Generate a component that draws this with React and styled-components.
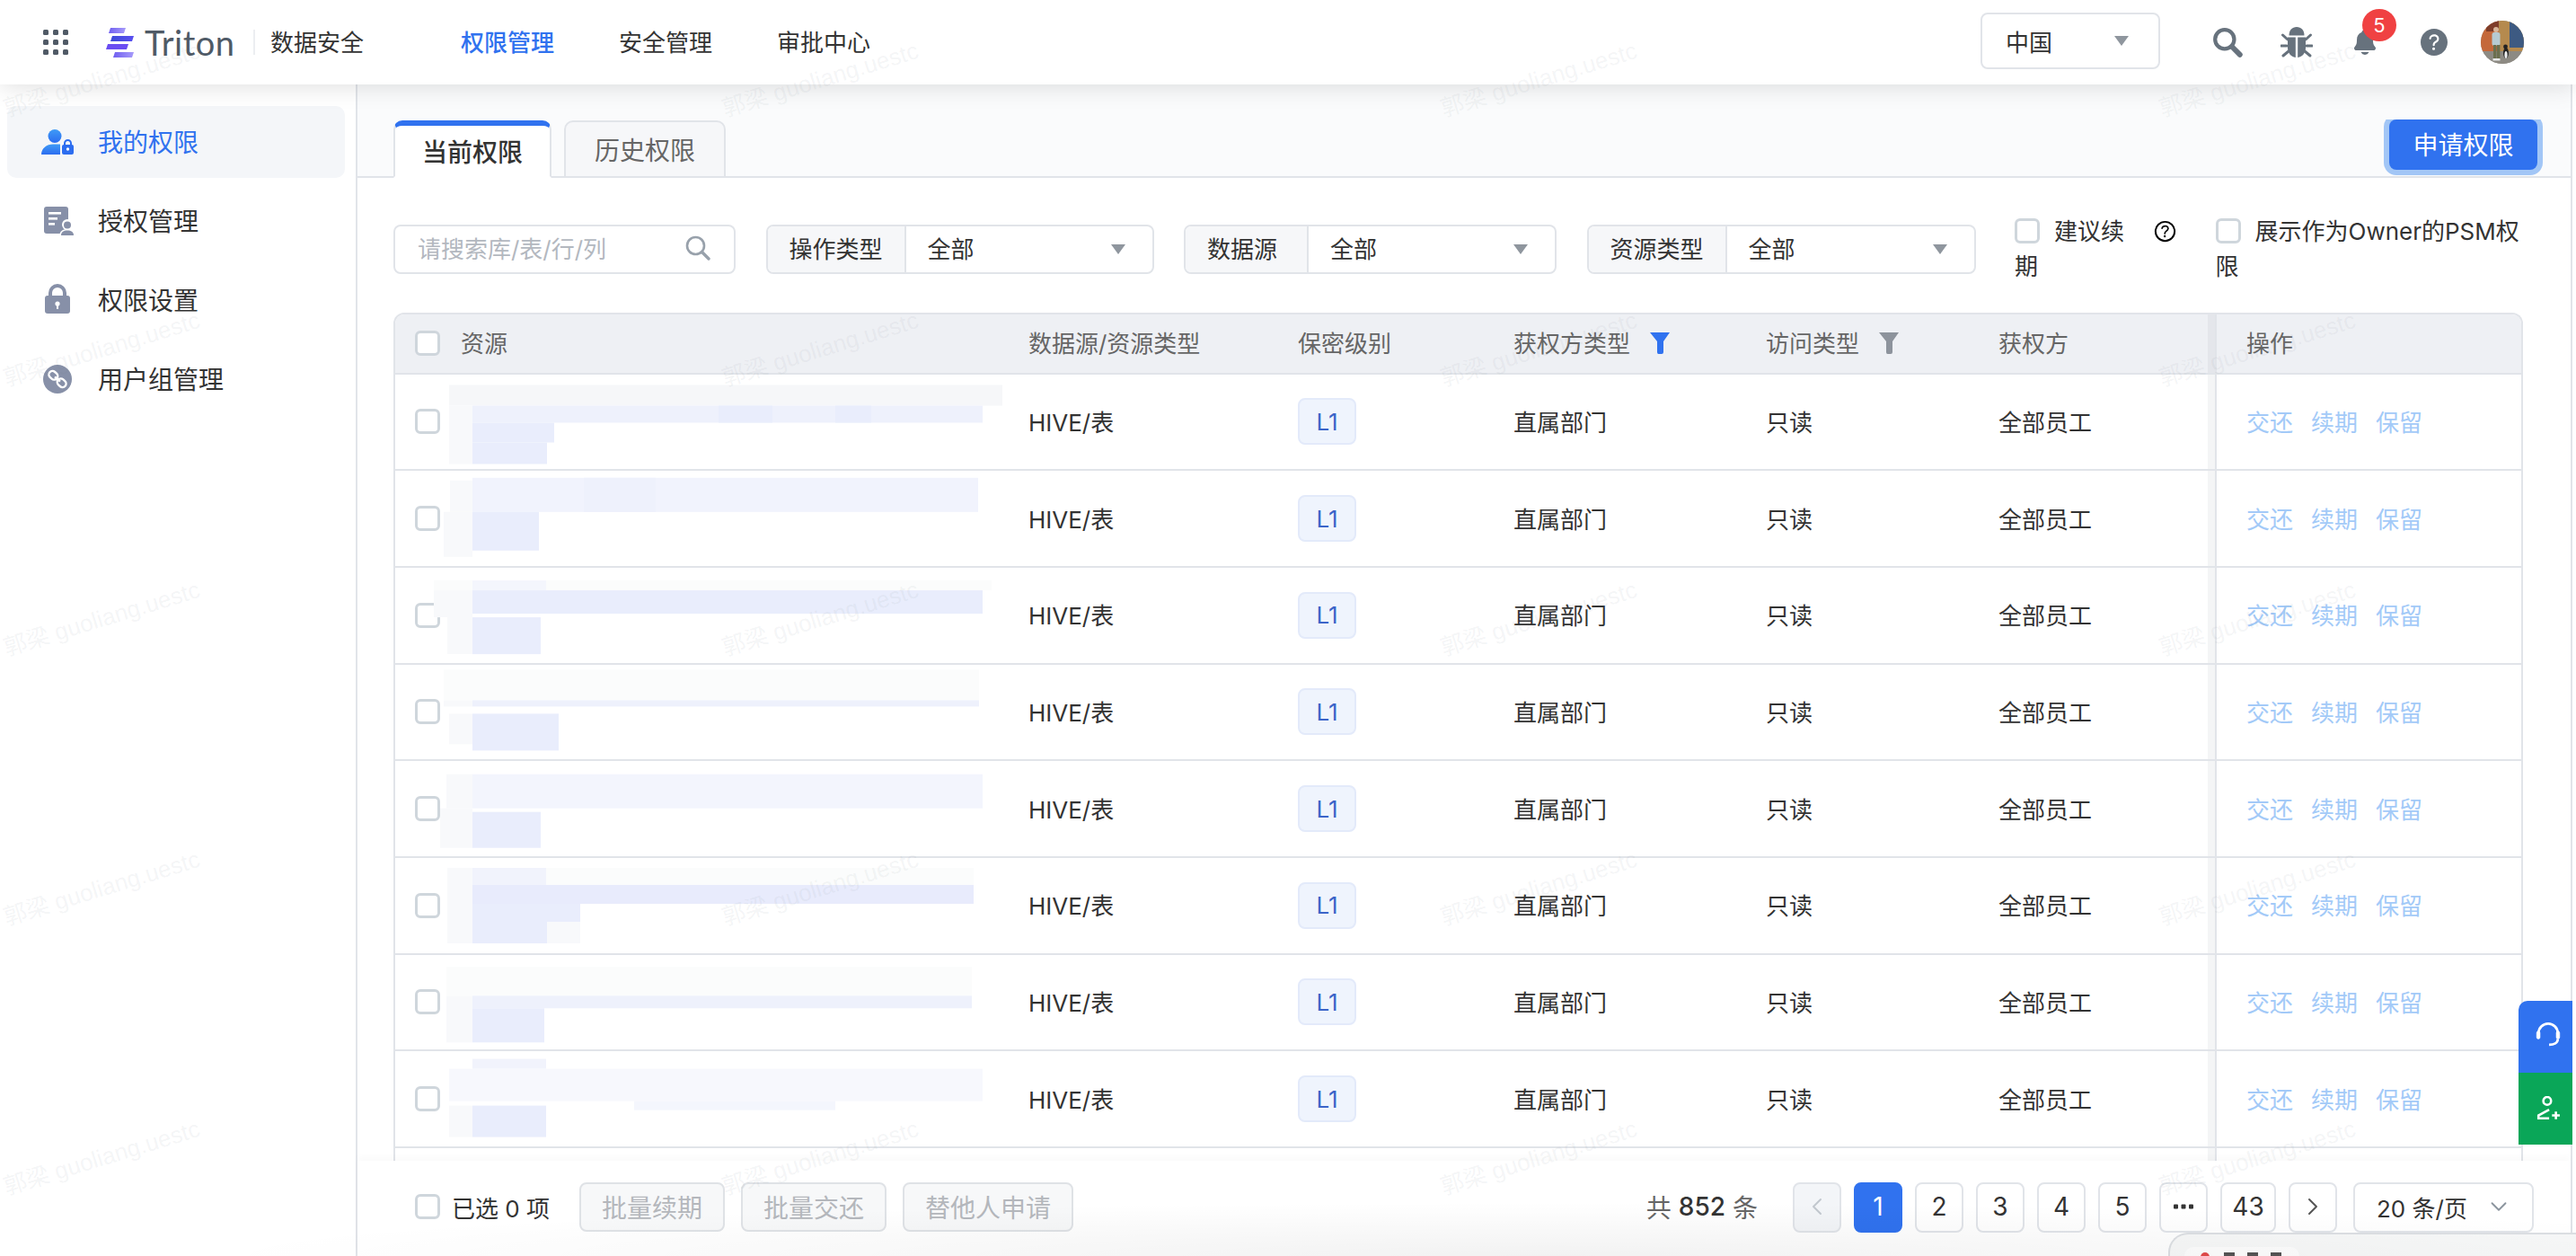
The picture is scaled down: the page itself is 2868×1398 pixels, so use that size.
import React from 'react';
import styled, { createGlobalStyle } from 'styled-components';
import { IoNotifications, IoHelpCircle, IoHelpCircleOutline } from 'react-icons/io5';
import { ChevronLeft, ChevronRight, ChevronDown } from 'lucide-react';

const FONT = `Inter, "Noto Sans CJK SC", sans-serif`;
const BLUE = '#3072ef';
const LINE = '#e1e4e9';

const Global = createGlobalStyle`
  html, body { margin: 0; padding: 0; background: #fff; overflow: hidden; }
  * { box-sizing: border-box; }
  #root { font-family: ${FONT}; color: #333; }
`;

const Page = styled.div`
  position: relative;
  width: 100%;
  height: 100vh;
  display: flex;
  flex-direction: column;
  overflow: hidden;
  background: #fff;
`;

/* ---------- top bar ---------- */
const TopBar = styled.header`
  position: relative;
  z-index: 3;
  flex: none;
  height: 94px;
  display: flex;
  align-items: center;
  padding: 0 58px 0 48px;
  background: #fff;
  box-shadow: 0 2px 26px rgba(0, 0, 0, 0.13);
`;
const DotsIcon = styled.svg`
  flex: none;
  width: 28px;
  height: 28px;
  margin: 0 42px 0 0;
  fill: #505a66;
`;
const LogoMark = styled.svg`
  flex: none;
  width: 31px;
  height: 33px;
  margin-right: 12px;
`;
const LogoText = styled.span`
  font-family: Lato, "Open Sans", sans-serif;
  font-size: 38px;
  line-height: 40px;
  width: 102px;
  letter-spacing: 0.5px;
  color: #4f5a66;
  white-space: nowrap;
`;
const LogoDivider = styled.i`
  flex: none;
  width: 2px;
  height: 28px;
  margin: 0 17px 0 19px;
  background: #eceef1;
`;
const Product = styled.span`
  font-size: 26px;
  width: 104px;
  padding-bottom: 4px;
  color: #333;
`;
const MainNav = styled.nav`
  display: flex;
  gap: 72px;
  margin-left: 108px;
  padding-bottom: 4px;
`;
const MainNavItem = styled.a`
  font-size: 26px;
  font-weight: ${(p) => (p.$active ? 500 : 400)};
  color: ${(p) => (p.$active ? BLUE : '#333')};
`;
const TopRight = styled.div`
  margin-left: auto;
  display: flex;
  align-items: center;
  gap: 36.5px;
`;
const RegionSelect = styled.div`
  width: 200px;
  height: 63px;
  display: flex;
  align-items: center;
  justify-content: space-between;
  padding: 0 33px 0 26px;
  margin: 0 18.5px 3px 0;
  border: 2px solid ${LINE};
  border-radius: 8px;
  font-size: 26px;
  color: #333;
`;
const Caret = styled.i`
  flex: none;
  width: 0;
  height: 0;
  border-left: 8px solid transparent;
  border-right: 8px solid transparent;
  border-top: 11px solid #8f969e;
`;
const IconSlot = styled.div`
  position: relative;
  flex: none;
  width: 40px;
  height: 40px;
  display: flex;
  align-items: center;
  justify-content: center;
  color: #67727d;
`;
const Badge = styled.span`
  position: absolute;
  left: 17px;
  top: -17px;
  width: 38px;
  height: 36px;
  border-radius: 50%;
  background: #f04142;
  color: #fff;
  font-size: 22px;
  line-height: 36px;
  text-align: center;
`;
const AvatarSvg = styled.svg`
  flex: none;
  width: 48px;
  height: 48px;
  margin-left: -4px;
`;

/* ---------- body ---------- */
const Body = styled.div`
  flex: 1;
  min-height: 0;
  display: flex;
`;
const Side = styled.aside`
  flex: none;
  width: 398px;
  padding: 24px 12px 0 8px;
  display: flex;
  flex-direction: column;
  gap: 8px;
  border-right: 2px solid ${LINE};
  background: #fff;
`;
const SideItem = styled.a`
  height: 80px;
  display: flex;
  align-items: center;
  gap: 27px;
  padding: 0 0 3px 38px;
  border-radius: 10px;
  font-size: 28px;
  background: ${(p) => (p.$active ? '#f4f6f9' : 'transparent')};
  color: ${(p) => (p.$active ? BLUE : '#333')};
`;
const SideIcon = styled.svg`
  flex: none;
  width: 36px;
  height: 36px;
  margin-top: 3px;
`;
const Main = styled.main`
  flex: 1;
  min-width: 0;
  display: flex;
  flex-direction: column;
  margin-right: 4px;
  border-right: 2px solid ${LINE};
`;
const TabBar = styled.div`
  flex: none;
  height: 104px;
  display: flex;
  align-items: flex-end;
  gap: 14px;
  padding: 0 31px 0 40px;
  background: #fafbfc;
  border-bottom: 2px solid ${LINE};
`;
const Tab = styled.div`
  position: relative;
  width: ${(p) => (p.$active ? 176 : 180)}px;
  height: 64px;
  margin-bottom: -2px;
  display: flex;
  align-items: center;
  justify-content: center;
  border: 2px solid ${LINE};
  border-top: ${(p) => (p.$active ? `6px solid ${BLUE}` : `2px solid ${LINE}`)};
  border-bottom: ${(p) => (p.$active ? '2px solid #fff' : `2px solid ${LINE}`)};
  border-radius: 10px 10px 0 0;
  background: ${(p) => (p.$active ? '#fff' : '#f6f7f9')};
  font-size: 28px;
  font-weight: ${(p) => (p.$active ? 500 : 400)};
  color: ${(p) => (p.$active ? '#333' : '#666')};
`;
const ApplyClip = styled.div`
  margin-left: auto;
  height: 63px;
  padding: 0 6px 6px;
  overflow: hidden;
`;
const ApplyButton = styled.button`
  width: 165px;
  height: 56px;
  padding: 0 0 2px;
  border: 0;
  border-radius: 8px;
  background: ${BLUE};
  box-shadow: 0 0 0 6px #a2c6f6;
  color: #fff;
  font: 28px ${FONT};
`;
const Panel = styled.div`
  flex: 1;
  min-height: 0;
  overflow: hidden;
  padding: 40px 0 0 40px;
  background: #fff;
`;
const Filters = styled.div`
  height: 78px;
  display: flex;
  align-items: center;
  gap: 33.5px;
`;
const SearchBox = styled.div`
  flex: none;
  width: 381px;
  height: 55px;
  display: flex;
  align-items: center;
  justify-content: space-between;
  padding: 0 26px 3px 25px;
  border: 2px solid ${LINE};
  border-radius: 8px;
  font-size: 26px;
  color: #b3b8bf;
`;
const SearchIconWrap = styled.span`
  display: flex;
  color: #98a1ab;
`;
const FilterSelect = styled.div`
  flex: none;
  width: ${(p) => p.$w}px;
  height: 55px;
  display: flex;
  border: 2px solid ${LINE};
  border-radius: 8px;
  overflow: hidden;
  font-size: 26px;
`;
const FilterLabel = styled.span`
  flex: none;
  width: ${(p) => p.$w}px;
  display: flex;
  align-items: center;
  padding: 0 0 4px 24px;
  background: #f6f7f9;
  border-right: 2px solid ${LINE};
  color: #333;
`;
const FilterValue = styled.span`
  flex: 1;
  display: flex;
  align-items: center;
  justify-content: space-between;
  padding: 0 30px 4px 24px;
  color: #333;
  & > i {
    margin-top: 4px;
  }
`;
const CheckLabel = styled.div`
  flex: none;
  width: ${(p) => p.$w}px;
  margin-left: ${(p) => p.$ml || 0}px;
  font-size: 26px;
  line-height: 39px;
  color: #333;
  white-space: nowrap;
`;
const Check = styled.span`
  display: inline-block;
  flex: none;
  width: 28px;
  height: 28px;
  border: 3px solid #cfd6dc;
  border-radius: 6px;
  background: #fff;
  vertical-align: -4px;
  margin-right: ${(p) => p.$mr || 0}px;
`;
const TipIcon = styled(IoHelpCircleOutline)`
  width: 31px;
  height: 31px;
  margin-left: 30px;
  vertical-align: -6px;
  color: #000;
`;

/* ---------- table ---------- */
const Table = styled.div`
  width: 2371px;
  margin-top: 32px;
  border: 2px solid ${LINE};
  border-bottom: 0;
  border-radius: 12px 12px 0 0;
`;
const COLS = '705px 300px 240px 281px 259px 241px 1fr';
const HeadRow = styled.div`
  display: grid;
  grid-template-columns: ${COLS};
  height: 66.5px;
  background: #eef0f4;
  border-bottom: 2px solid ${LINE};
  border-radius: 10px 10px 0 0;
  font-size: 26px;
  color: #666;
`;
const Row = styled.div`
  position: relative;
  display: grid;
  grid-template-columns: ${COLS};
  height: 107.7px;
  border-bottom: 2px solid ${LINE};
  font-size: 26px;
  color: #333;
`;
const Cell = styled.div`
  display: flex;
  align-items: center;
  white-space: nowrap;
  padding-bottom: ${(p) => (p.$head ? 4 : 2)}px;
`;
const TagCell = styled(Cell)`
  padding-bottom: 0;
`;
const CheckCell = styled(Cell)`
  padding: 0 0 0 22px;
`;
const HeadLabel = styled.span`
  margin-left: 23px;
  padding-bottom: 4px;
`;
const FixedCell = styled(Cell)`
  position: relative;
  padding-left: 33px;
  border-left: 2px solid ${LINE};
  box-shadow: -8px 0 0 rgba(70, 85, 95, 0.06);
  gap: 20px;
`;
const FilterIcon = styled.svg`
  flex: none;
  width: 22px;
  height: 24px;
  margin: 4px 0 0 22px;
  fill: ${(p) => (p.$on ? BLUE : '#8d939c')};
`;
const LevelTag = styled.span`
  width: 65px;
  height: 52px;
  display: flex;
  align-items: center;
  justify-content: center;
  border: 2px solid #e3eafa;
  border-radius: 8px;
  background: #eff4fd;
  color: #3b64c8;
  font-size: 26px;
`;
const ActionLink = styled.a`
  color: #a3caf8;
`;
const SmudgeSvg = styled.svg`
  position: absolute;
  left: 0;
  top: 0;
  width: 705px;
  height: 106px;
  pointer-events: none;
`;

/* ---------- footer ---------- */
const Footer = styled.footer`
  position: relative;
  z-index: 1;
  flex: none;
  height: 106px;
  display: flex;
  justify-content: space-between;
  padding: 24px 41px 0 64px;
  background: #fff;
  box-shadow: 0 -4px 8px rgba(0, 0, 0, 0.025);
`;
const FooterLeft = styled.div`
  display: flex;
  align-items: flex-start;
  gap: 18px;
`;
const Selected = styled.div`
  display: flex;
  align-items: center;
  height: 56px;
  gap: 13px;
  margin-right: 15px;
  padding-bottom: 2px;
  font-size: 26px;
  white-space: pre;
  color: #333;
`;
const Disabled = styled.button`
  height: 55px;
  padding: 0 23px 2px;
  border: 2px solid #dfe2e6;
  border-radius: 8px;
  background: #f7f8f9;
  color: #b4b7bc;
  font: 28px ${FONT};
`;
const FooterRight = styled.div`
  display: flex;
  align-items: flex-start;
`;
const Total = styled.div`
  height: 56px;
  display: flex;
  align-items: center;
  gap: 8px;
  margin-right: 39px;
  padding-bottom: 2px;
  font-size: 28px;
  color: #666;
`;
const TotalNum = styled.b`
  font-weight: 500;
  color: #333;
`;
const Pager = styled.div`
  display: flex;
  gap: 14px;
`;
const PageBtn = styled.div`
  width: ${(p) => p.$w || 54}px;
  height: 56px;
  display: flex;
  align-items: center;
  justify-content: center;
  padding-bottom: 2px;
  border: 2px solid ${(p) => (p.$active ? BLUE : LINE)};
  border-radius: 8px;
  background: ${(p) => (p.$active ? BLUE : p.$disabled ? '#f3f5f8' : '#fff')};
  color: ${(p) => (p.$active ? '#fff' : p.$disabled ? '#c2c8cf' : '#333')};
  font-size: 28px;
`;
const PageSize = styled.div`
  width: 201px;
  height: 56px;
  margin-left: 18px;
  display: flex;
  align-items: center;
  justify-content: space-between;
  padding: 0 22px 2px 24px;
  border: 2px solid ${LINE};
  border-radius: 8px;
  font-size: 26px;
  color: #333;
  white-space: nowrap;
`;
const MoreDots = styled.svg`
  width: 22px;
  height: 6px;
  fill: #333;
`;

/* ---------- things lying over the page ---------- */
const SideDock = styled.div`
  position: absolute;
  z-index: 4;
  right: 4px;
  top: 1114px;
  width: 60px;
  border-radius: 10px 0 0 0;
  overflow: hidden;
`;
const DockBtn = styled.div`
  height: 80px;
  display: flex;
  align-items: center;
  justify-content: center;
  padding: ${(p) => p.$pad || '0 0 0 6px'};
  background: ${(p) => p.$bg};
`;
const PeekCard = styled.div`
  position: absolute;
  z-index: 2;
  left: 2414px;
  right: 0;
  top: 1372px;
  height: 26px;
  overflow: hidden;
  padding: 14px 0 0 16px;
  border: 2px solid #dcdfe3;
  border-right: 0;
  border-bottom: 0;
  border-radius: 22px 0 0 0;
  background: #f7f8f8;
`;
const PeekTag = styled.div`
  width: 128px;
  height: 10px;
  display: flex;
  align-items: flex-start;
  gap: 16px;
  padding: 6px 0 0 18px;
  overflow: hidden;
  border-radius: 10px 10px 0 0;
  background: #fdfdfd;
`;
const PeekDot = styled.i`
  flex: none;
  width: 10px;
  height: 10px;
  border-radius: 50%;
  background: #e24a4a;
`;
const PeekStroke = styled.i`
  flex: none;
  width: 72px;
  height: 4px;
  background: repeating-linear-gradient(90deg, #555 0 12px, transparent 12px 26px);
`;
const BottomShade = styled.div`
  position: absolute;
  z-index: 5;
  left: 0;
  right: 0;
  bottom: 0;
  height: 70px;
  pointer-events: none;
  background: radial-gradient(ellipse 1500px 60px at 60% 100%, rgba(0, 0, 0, 0.05), transparent);
`;
const Watermarks = styled.div`
  position: absolute;
  z-index: 6;
  inset: 0;
  display: grid;
  grid-template-columns: repeat(4, 800px);
  grid-auto-rows: 300px;
  pointer-events: none;
  overflow: hidden;
`;
const WmCell = styled.div`
  padding-top: 76px;
`;
const WmText = styled.div`
  width: 210px;
  height: 30px;
  line-height: 30px;
  font-family: "Liberation Sans", "Noto Sans CJK SC", sans-serif;
  font-size: 26px;
  white-space: nowrap;
  color: rgba(110, 125, 135, 0.085);
  transform: rotate(-17deg);
`;

/* ---------- icons ---------- */
const Dots = () => (
  <DotsIcon viewBox="0 0 28 28">
    {[0, 11, 22].flatMap((y) =>
      [0, 11, 22].map((x) => <rect key={`${x}-${y}`} x={x} y={y} width="6" height="6" rx="1.5" />)
    )}
  </DotsIcon>
);
const Logo = () => (
  <LogoMark viewBox="0 0 31 33">
    <defs>
      <linearGradient id="lg1" x1="0" x2="1" y1="0" y2="0">
        <stop offset="0" stopColor="#6f5ff0" />
        <stop offset="1" stopColor="#a79bfa" />
      </linearGradient>
      <linearGradient id="lg2" x1="0" x2="1" y1="0" y2="0">
        <stop offset="0" stopColor="#3c4ad8" />
        <stop offset="1" stopColor="#5a4ff0" />
      </linearGradient>
    </defs>
    <polygon points="5,0 22,0 20,6 3,6" fill="url(#lg1)" />
    <polygon points="7,9 31,9 29,15 5,15" fill="url(#lg2)" />
    <polygon points="2,18 25,18 23,24 0,24" fill="#6a4df2" />
    <polygon points="10,27 31,27 29,33 8,33" fill="url(#lg1)" />
  </LogoMark>
);
const SearchGlyph = ({ size = 34 }) => (
  <svg width={size} height={size} viewBox="0 0 32 32" fill="none" stroke="currentColor">
    <circle cx="13" cy="13" r="10" strokeWidth="4" />
    <path d="M20.5 20.5 L29 29" strokeWidth="5.5" strokeLinecap="round" />
  </svg>
);
const BugGlyph = () => (
  <svg width="36" height="36" viewBox="0 0 36 36" fill="currentColor" stroke="none">
    <path d="M9.5 10.5 C9.5 4.5 13 1 18 1 C23 1 26.5 4.5 26.5 10.5 Z" />
    <path d="M8 12.5 H16.8 V35 C11.5 34 8 30 8 24 Z" />
    <path d="M28 12.5 H19.2 V35 C24.5 34 28 30 28 24 Z" />
    <g stroke="currentColor" strokeWidth="3" strokeLinecap="round" fill="none">
      <path d="M8 15 L2.5 10" />
      <path d="M7 22 H1" />
      <path d="M9 28 L3 33" />
      <path d="M28 15 L33.5 10" />
      <path d="M29 22 H35" />
      <path d="M27 28 L33 33" />
    </g>
  </svg>
);
const Avatar = () => (
  <AvatarSvg viewBox="0 0 48 48">
    <defs>
      <clipPath id="avc">
        <circle cx="24" cy="24" r="24" />
      </clipPath>
    </defs>
    <g clipPath="url(#avc)">
      <rect width="48" height="48" fill="#8f8c84" />
      <rect width="20" height="34" fill="#c4683a" />
      <rect x="6" y="0" width="14" height="12" fill="#7f3d2a" />
      <rect x="20" width="28" height="34" fill="#b58a4e" />
      <rect x="32" width="16" height="30" fill="#3d5a82" />
      <rect y="34" width="48" height="14" fill="#8d8a83" />
      <circle cx="17" cy="10" r="3" fill="#d9b79c" />
      <rect x="12.5" y="13" width="9" height="15" rx="2.5" fill="#b6cbd3" />
      <rect x="14" y="27" width="3.4" height="16" fill="#6b6f4e" />
      <rect x="18" y="27" width="3.4" height="16" fill="#6b6f4e" />
      <rect x="13.5" y="42" width="8" height="2.5" fill="#e8e8e8" />
      <ellipse cx="28" cy="36" rx="3" ry="6" fill="#222" />
      <ellipse cx="28" cy="38" rx="1.6" ry="4" fill="#eee" />
      <circle cx="27.5" cy="29" r="2.4" fill="#222" />
    </g>
  </AvatarSvg>
);
const PersonLock = () => (
  <SideIcon viewBox="0 0 36 36">
    <defs>
      <linearGradient id="pl" x1="0" x2="0" y1="0" y2="1">
        <stop offset="0" stopColor="#3f9bf6" />
        <stop offset="1" stopColor="#2c6df0" />
      </linearGradient>
    </defs>
    <circle cx="15" cy="11.5" r="7.5" fill="url(#pl)" />
    <path d="M0 32 C0 25 6 20.5 13 20.5 H21 V32 Z" fill="url(#pl)" />
    <rect x="23" y="21" width="13" height="11" rx="2" fill="#2c6df0" />
    <path d="M26 22 V19.5 a3.5 3.5 0 0 1 7 0 V22" fill="none" stroke="#2c6df0" strokeWidth="2" />
    <circle cx="29.5" cy="26" r="1.7" fill="#fff" />
  </SideIcon>
);
const DocPerson = () => (
  <SideIcon viewBox="0 0 36 36">
    <rect x="3" y="2" width="27" height="30" rx="3" fill="#8790a8" />
    <rect x="8" y="8" width="14" height="2.6" fill="#fff" />
    <rect x="8" y="14" width="10" height="2.6" fill="#fff" />
    <rect x="8" y="20" width="7" height="2.6" fill="#fff" />
    <circle cx="29" cy="22" r="6" fill="#fff" />
    <path d="M20 36 C20 29 24 27 29 27 C34 27 38 29 38 36 Z" fill="#fff" />
    <circle cx="29" cy="22.5" r="4" fill="#8790a8" />
    <path d="M22 34 C22 30 25 28.5 29 28.5 C33 28.5 36 30 36 34 Z" fill="#8790a8" />
  </SideIcon>
);
const Padlock = () => (
  <SideIcon viewBox="0 0 36 36">
    <path d="M10 15 V10 a8 8 0 0 1 16 0 V15" fill="none" stroke="#8790a8" strokeWidth="4" />
    <rect x="4" y="13" width="28" height="20" rx="3" fill="#8790a8" />
    <circle cx="18" cy="22" r="2.6" fill="#fff" />
    <rect x="17" y="23" width="2" height="5" fill="#fff" />
  </SideIcon>
);
const LinkCircle = () => (
  <SideIcon viewBox="0 0 36 36">
    <circle cx="18" cy="18" r="16" fill="#8790a8" />
    <g transform="rotate(42 18 18)" fill="none" stroke="#fff" strokeWidth="2.4">
      <rect x="6.5" y="14" width="10.5" height="8" rx="4" />
      <rect x="19" y="14" width="10.5" height="8" rx="4" />
      <path d="M14 18 H22" />
    </g>
  </SideIcon>
);
const Funnel = ({ on }) => (
  <FilterIcon $on={on} viewBox="0 0 22 24">
    <path d="M0 0 H22 L15 10 V22 Q15 24 13 24 H9.5 Q8 24 8 22 V10 Z" />
  </FilterIcon>
);
const Headset = () => (
  <svg width="30" height="30" viewBox="0 0 28 28" fill="none" stroke="#fff">
    <path d="M4 14 A10 10 0 0 1 24 14" strokeWidth="2.6" />
    <rect x="2" y="12" width="3.6" height="8" rx="1.8" fill="#fff" strokeWidth="0.5" />
    <rect x="22.4" y="12" width="3.6" height="8" rx="1.8" fill="#fff" strokeWidth="0.5" />
    <path d="M24 20 C24 24 20 26 15 26" strokeWidth="2.6" />
  </svg>
);
const UserPlus = () => (
  <svg width="28" height="28" viewBox="0 0 26 26" fill="none" stroke="#fff" strokeWidth="2.4">
    <circle cx="12" cy="5" r="4" />
    <path d="M14 14 L3 20 V23 H14" />
    <path d="M17 20 H25 M21 16 V24" />
  </svg>
);
const SearchThin = () => (
  <svg width="28" height="28" viewBox="0 0 28 28" fill="none" stroke="currentColor">
    <circle cx="11.5" cy="11.5" r="9.5" strokeWidth="2.6" />
    <path d="M18.5 18.5 L26 26" strokeWidth="3.4" strokeLinecap="round" />
  </svg>
);

/* ---------- data ---------- */
const A = '#e9edfc';
const B = '#eef1fc';
const C = '#f8f9fb';
const D = '#f4f6fd';
const G = '#f6f7f9';
const W = '#fbfcfc';

const SMUDGES = [
  [
    [500, 428, 1116, 451, G],
    [500, 451, 526, 516, C],
    [526, 451, 1094, 470, B],
    [526, 470, 617, 492, A],
    [526, 492, 609, 516, A],
    [800, 451, 860, 470, A],
    [930, 451, 970, 470, A],
  ],
  [
    [501, 535, 526, 570, C],
    [526, 532, 1089, 570, '#f1f3fd'],
    [650, 532, 730, 570, B],
    [494, 570, 526, 620, C],
    [526, 570, 600, 613, A],
  ],
  [
    [483, 646, 1104, 657, W],
    [526, 646, 608, 657, D],
    [483, 657, 526, 687, C],
    [526, 657, 1094, 683, A],
    [498, 687, 526, 728, C],
    [526, 687, 602, 728, A],
  ],
  [
    [494, 745, 1090, 779, W],
    [494, 779, 526, 786, C],
    [526, 779, 1090, 786, B],
    [500, 794, 526, 828, C],
    [526, 794, 622, 835, A],
  ],
  [
    [497, 862, 526, 900, C],
    [526, 862, 1094, 900, '#f3f5fd'],
    [490, 900, 526, 944, C],
    [526, 904, 602, 944, A],
  ],
  [
    [498, 966, 526, 1050, C],
    [608, 966, 1084, 985, W],
    [526, 966, 608, 985, '#f1f3fc'],
    [526, 985, 1084, 1006, '#e8ebfc'],
    [526, 1006, 646, 1026, A],
    [526, 1026, 609, 1050, A],
    [609, 1026, 646, 1050, C],
  ],
  [
    [497, 1076, 1082, 1108, W],
    [497, 1108, 526, 1160, C],
    [526, 1108, 1082, 1122, B],
    [526, 1122, 606, 1160, A],
  ],
  [
    [526, 1179, 608, 1190, '#f1f3fc'],
    [500, 1190, 1094, 1226, '#f7f8fd'],
    [706, 1226, 930, 1236, D],
    [500, 1231, 526, 1266, C],
    [526, 1231, 608, 1266, A],
  ],
];

const Smudge = ({ rects, index }) => {
  const top = 416.5 + index * 107.7;
  return (
    <SmudgeSvg viewBox="0 0 705 106">
      {rects.map(([x0, y0, x1, y1, c], i) => (
        <rect key={i} x={x0 - 440} y={y0 - top} width={x1 - x0} height={y1 - y0} fill={c} />
      ))}
    </SmudgeSvg>
  );
};

const Select = ({ label, labelW, w }) => (
  <FilterSelect $w={w}>
    <FilterLabel $w={labelW}>{label}</FilterLabel>
    <FilterValue>
      全部
      <Caret />
    </FilterValue>
  </FilterSelect>
);

export default function App() {
  return (
    <Page>
      <Global />
      <TopBar>
        <Dots />
        <Logo />
        <LogoText>Triton</LogoText>
        <LogoDivider />
        <Product>数据安全</Product>
        <MainNav>
          <MainNavItem $active>权限管理</MainNavItem>
          <MainNavItem>安全管理</MainNavItem>
          <MainNavItem>审批中心</MainNavItem>
        </MainNav>
        <TopRight>
          <RegionSelect>
            中国
            <Caret />
          </RegionSelect>
          <IconSlot>
            <SearchGlyph />
          </IconSlot>
          <IconSlot>
            <BugGlyph />
          </IconSlot>
          <IconSlot>
            <IoNotifications size={32} />
            <Badge>5</Badge>
          </IconSlot>
          <IconSlot>
            <IoHelpCircle size={44} />
          </IconSlot>
          <Avatar />
        </TopRight>
      </TopBar>
      <Body>
        <Side>
          <SideItem $active>
            <PersonLock />
            我的权限
          </SideItem>
          <SideItem>
            <DocPerson />
            授权管理
          </SideItem>
          <SideItem>
            <Padlock />
            权限设置
          </SideItem>
          <SideItem>
            <LinkCircle />
            用户组管理
          </SideItem>
        </Side>
        <Main>
          <TabBar>
            <Tab $active>当前权限</Tab>
            <Tab>历史权限</Tab>
            <ApplyClip>
              <ApplyButton>申请权限</ApplyButton>
            </ApplyClip>
          </TabBar>
          <Panel>
            <Filters>
              <SearchBox>
                请搜索库/表/行/列
                <SearchIconWrap>
                  <SearchThin />
                </SearchIconWrap>
              </SearchBox>
              <Select label="操作类型" labelW={154} w={432} />
              <Select label="数据源" labelW={137} w={415} />
              <Select label="资源类型" labelW={154} w={433} />
              <CheckLabel $w={190} $ml={10}>
                <Check $mr={16} />
                建议续
                <TipIcon />
                <br />期
              </CheckLabel>
              <CheckLabel $w={345}>
                <Check $mr={16} />
                展示作为Owner的PSM权
                <br />限
              </CheckLabel>
            </Filters>
            <Table>
              <HeadRow>
                <CheckCell>
                  <Check />
                  <HeadLabel>资源</HeadLabel>
                </CheckCell>
                <Cell $head>数据源/资源类型</Cell>
                <Cell $head>保密级别</Cell>
                <Cell $head>
                  获权方类型
                  <Funnel on />
                </Cell>
                <Cell $head>
                  访问类型
                  <Funnel />
                </Cell>
                <Cell $head>获权方</Cell>
                <FixedCell $head>操作</FixedCell>
              </HeadRow>
              {SMUDGES.map((rects, i) => (
                <Row key={i}>
                  <CheckCell>
                    <Check />
                  </CheckCell>
                  <Cell>HIVE/表</Cell>
                  <TagCell>
                    <LevelTag>L1</LevelTag>
                  </TagCell>
                  <Cell>直属部门</Cell>
                  <Cell>只读</Cell>
                  <Cell>全部员工</Cell>
                  <FixedCell>
                    <ActionLink>交还</ActionLink>
                    <ActionLink>续期</ActionLink>
                    <ActionLink>保留</ActionLink>
                  </FixedCell>
                  <Smudge rects={rects} index={i} />
                </Row>
              ))}
              <Row>
                <Cell />
                <Cell />
                <Cell />
                <Cell />
                <Cell />
                <Cell />
                <FixedCell />
              </Row>
            </Table>
          </Panel>
          <Footer>
            <FooterLeft>
              <Selected>
                <Check />
                已选 0 项
              </Selected>
              <Disabled>批量续期</Disabled>
              <Disabled>批量交还</Disabled>
              <Disabled>替他人申请</Disabled>
            </FooterLeft>
            <FooterRight>
              <Total>
                共<TotalNum>852</TotalNum>条
              </Total>
              <Pager>
                <PageBtn $disabled>
                  <ChevronLeft size={32} strokeWidth={1.5} />
                </PageBtn>
                <PageBtn $active>1</PageBtn>
                <PageBtn>2</PageBtn>
                <PageBtn>3</PageBtn>
                <PageBtn>4</PageBtn>
                <PageBtn>5</PageBtn>
                <PageBtn>
                  <MoreDots viewBox="0 0 22 6">
                    <rect x="0" y="0.5" width="5" height="5" rx="1" />
                    <rect x="8.5" y="0.5" width="5" height="5" rx="1" />
                    <rect x="17" y="0.5" width="5" height="5" rx="1" />
                  </MoreDots>
                </PageBtn>
                <PageBtn $w={62}>43</PageBtn>
                <PageBtn>
                  <ChevronRight size={32} strokeWidth={1.5} color="#555" />
                </PageBtn>
              </Pager>
              <PageSize>
                20 条/页
                <ChevronDown size={30} strokeWidth={1.5} color="#8b949e" />
              </PageSize>
            </FooterRight>
          </Footer>
        </Main>
      </Body>
      <SideDock>
        <DockBtn $bg={BLUE} $pad="0 0 8px 6px">
          <Headset />
        </DockBtn>
        <DockBtn $bg="#0aa658">
          <UserPlus />
        </DockBtn>
      </SideDock>
      <PeekCard>
        <PeekTag>
          <PeekDot />
          <PeekStroke />
        </PeekTag>
      </PeekCard>
      <BottomShade />
      <Watermarks>
        {Array.from({ length: 20 }, (_, i) => (
          <WmCell key={i}>
            <WmText>郭梁 guoliang.uestc</WmText>
          </WmCell>
        ))}
      </Watermarks>
    </Page>
  );
}
